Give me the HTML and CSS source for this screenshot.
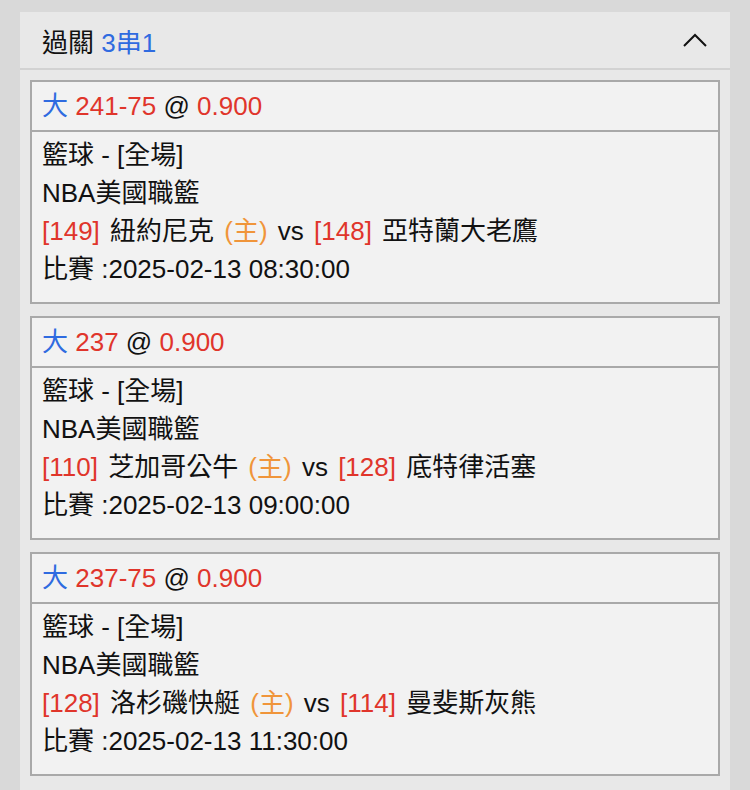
FILE: index.html
```html
<!DOCTYPE html>
<html lang="zh-TW">
<head>
    <meta charset="UTF-8">
    <meta name="viewport" content="width=device-width, initial-scale=1.0">
    <title>過關 3串1</title>
    <link rel="stylesheet" href="styles.css">
</head>
<body>
    <div class="parlay-panel">
        <div class="panel-head">
            <span>過關 <span class="blue">3串1</span></span>
            <svg class="chevron" width="24" height="14" viewBox="0 0 24 14">
                <path d="M1 13 L12 2 L23 13" fill="none" stroke="#111" stroke-width="2"/>
            </svg>
        </div>

        <div class="panel-body">
            <div class="bet-card">
                <div class="bet-title"><span class="blue">大</span> <span class="red">241-75</span> @ <span class="red">0.900</span></div>
                <div class="bet-info">
                    <div class="row">籃球 - [全場]</div>
                    <div class="row">NBA美國職籃</div>
                    <div class="row match"><span class="red">[149]</span> 紐約尼克 <span class="orange">(主)</span> vs <span class="red">[148]</span> 亞特蘭大老鷹</div>
                    <div class="row">比賽 :2025-02-13 08:30:00</div>
                </div>
            </div>

            <div class="bet-card">
                <div class="bet-title"><span class="blue">大</span> <span class="red">237</span> @ <span class="red">0.900</span></div>
                <div class="bet-info">
                    <div class="row">籃球 - [全場]</div>
                    <div class="row">NBA美國職籃</div>
                    <div class="row match"><span class="red">[110]</span> 芝加哥公牛 <span class="orange">(主)</span> vs <span class="red">[128]</span> 底特律活塞</div>
                    <div class="row">比賽 :2025-02-13 09:00:00</div>
                </div>
            </div>

            <div class="bet-card">
                <div class="bet-title"><span class="blue">大</span> <span class="red">237-75</span> @ <span class="red">0.900</span></div>
                <div class="bet-info">
                    <div class="row">籃球 - [全場]</div>
                    <div class="row">NBA美國職籃</div>
                    <div class="row match"><span class="red">[128]</span> 洛杉磯快艇 <span class="orange">(主)</span> vs <span class="red">[114]</span> 曼斐斯灰熊</div>
                    <div class="row">比賽 :2025-02-13 11:30:00</div>
                </div>
            </div>
        </div>
    </div>
</body>
</html>
```

FILE: styles.css
```css
body {
    margin: 0;
    padding: 12px 20px 0;
    background: #d9d9d9;
    font-family: "Liberation Sans", "Noto Sans CJK TC", sans-serif;
    font-size: 26px;
    color: #111;
}
.parlay-panel {
    background: #e8e8e8;
}
.panel-head {
    height: 56px;
    display: flex;
    align-items: center;
    justify-content: space-between;
    padding: 0 23px 0 22px;
    border-bottom: 2px solid #d2d2d2;
}
.chevron {
    display: block;
}
.panel-body {
    padding: 10px 10px 2px;
}
.bet-card {
    background: #f2f2f2;
    border: 2px solid #a9a9a9;
    margin-bottom: 12px;
}
.bet-title {
    height: 48px;
    line-height: 48px;
    padding: 0 10px;
    border-bottom: 2px solid #a9a9a9;
    overflow: hidden;
}
.bet-info {
    padding: 4px 10px 14px;
}
.row {
    height: 38px;
    line-height: 38px;
    white-space: nowrap;
}
.match {
    word-spacing: 3px;
}
.blue {
    color: #2f6be0;
}
.red {
    color: #e0352b;
}
.orange {
    color: #f0953a;
}
```
